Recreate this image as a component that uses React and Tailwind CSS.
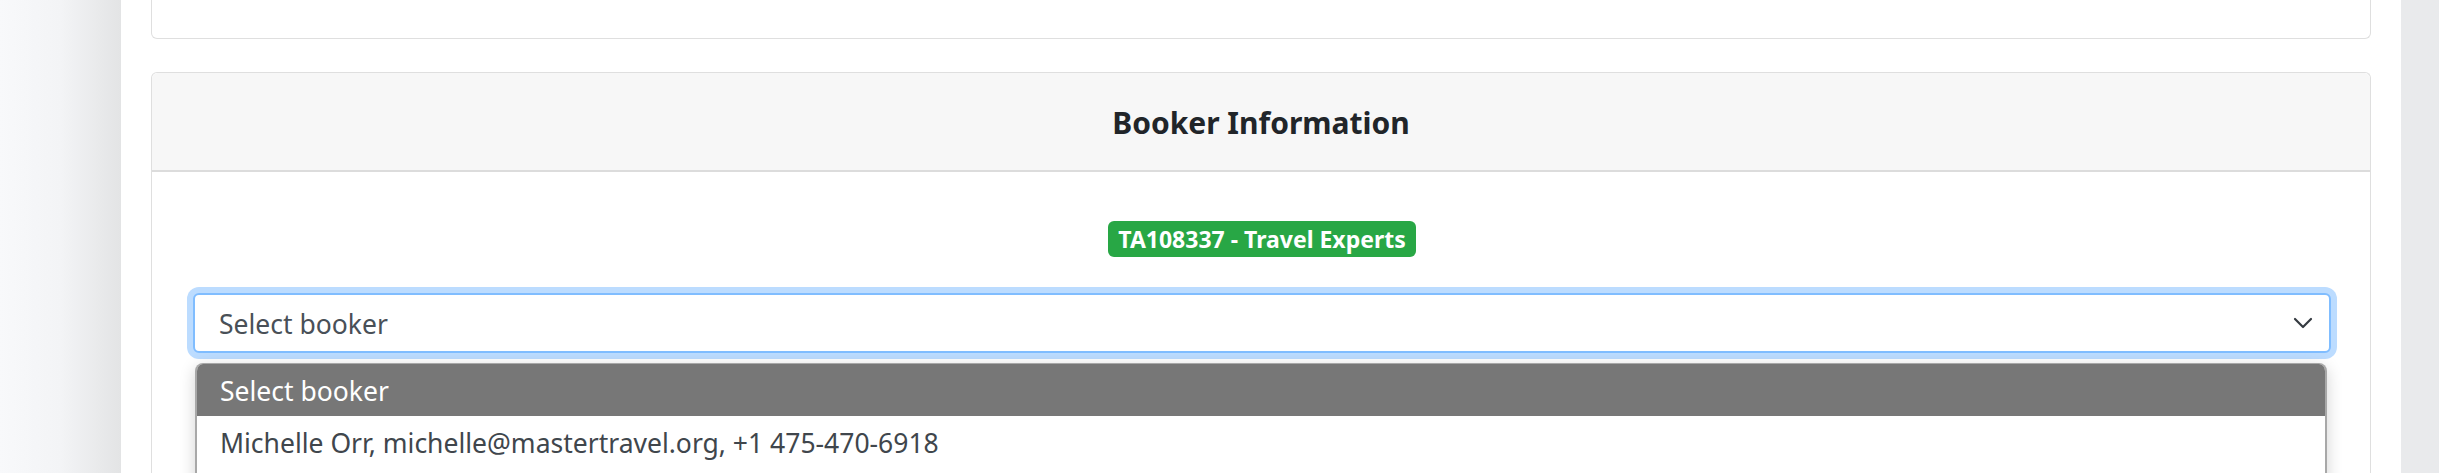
import React from "react";

export default function App() {
  const font = { fontFamily: '"Noto Sans", "Open Sans", Arial, sans-serif' };
  return (
    <div className="flex h-[473px] w-[2439px] overflow-hidden bg-white" style={font}>
      <div className="w-[121px] shrink-0 bg-gradient-to-r from-[#f8f9fb] via-[#f3f4f6] to-[#e3e4e5]" />
      <div className="relative flex-1 overflow-hidden bg-white px-[30px]">
        <div className="h-[39px] rounded-b-[6px] border-x border-b border-[#dfdfdf]" />
        <div className="mt-[33px] rounded-t-[6px] border-x border-t border-[#dfdfdf] pb-[200px]">
          <div className="flex h-[99px] items-center justify-center rounded-t-[6px] border-b-2 border-[#dcdcdc] bg-[#f7f7f7] pt-[3px]">
            <h5 className="text-[30px] font-bold leading-none text-[#212529]">Booker Information</h5>
          </div>
          <div className="pl-[41px] pr-[39px] pt-[49px]">
            <div className="flex justify-center">
              <span className="flex h-[36px] items-center rounded-[6px] bg-[#28a745] px-[10px] text-[23px] font-bold leading-none text-white">
                TA108337 - Travel Experts
              </span>
            </div>
            <div className="mt-[36px] flex h-[60px] items-center justify-between rounded-[6px] border-2 border-[#80bdff] bg-white pl-[24px] pr-[16px] shadow-[0_0_0_6px_#bcdcff]">
              <span className="pt-[3px] text-[26.5px] text-[#495057]">Select booker</span>
              <svg width="20" height="12" viewBox="0 0 20 12" fill="none">
                <path d="M2 2l8 8 8-8" stroke="#343a40" strokeWidth="2.2" strokeLinecap="round" strokeLinejoin="round" />
              </svg>
            </div>
          </div>
        </div>
        <div className="absolute left-[74px] right-[74px] top-[363px] overflow-hidden rounded-t-[8px] border-x-2 border-t border-[#a8a8a8] bg-white shadow-[0_4px_16px_rgba(0,0,0,0.18)]">
          <div className="flex h-[52px] items-center bg-[#777777] pl-[23px] pt-[3px] text-[26.5px] text-white">Select booker</div>
          <div className="flex h-[52px] items-center bg-white pl-[23px] pt-[3px] text-[26.5px] text-[#40464c]">
            Michelle Orr, michelle@mastertravel.org, +1 475-470-6918
          </div>
          <div className="h-[80px] bg-white" />
        </div>
      </div>
      <div className="w-[38px] shrink-0 bg-[#e9eaec]" />
    </div>
  );
}
